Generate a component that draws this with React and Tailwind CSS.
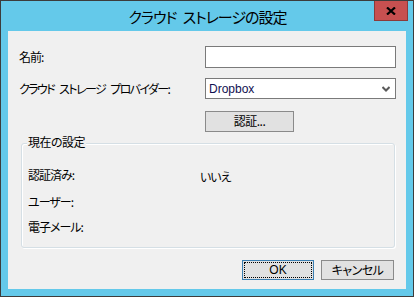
import React from 'react';

const jp = { fontFamily: '"Noto Sans CJK JP", "Noto Sans", sans-serif', fontFeatureSettings: '"palt"' };

function CloseIcon() {
  return (
    <svg width="10" height="8" viewBox="0 0 10 8">
      <path d="M1 0.5 L9 7.5 M9 0.5 L1 7.5" stroke="#000" strokeWidth="2.2" />
    </svg>
  );
}

function Chevron() {
  return (
    <svg width="8" height="6" viewBox="0 0 8 6">
      <path d="M0.5 1 L4 4.5 L7.5 1" stroke="#5a5a5a" strokeWidth="2" fill="none" />
    </svg>
  );
}

function Row({ label, children, className, tight }) {
  return (
    <div className={`flex items-center ${className}`}>
      <div className={`w-[197px] shrink-0 whitespace-nowrap pl-[11px] text-[12px] leading-none text-black ${tight ? 'tracking-[-1.6px] [word-spacing:4px]' : 'tracking-[-1px]'}`}>{label}</div>
      {children}
    </div>
  );
}

export default function App() {
  return (
    <div className="w-[414px] h-[297px] border border-[#3c3c3c] bg-[#64c9ea] flex flex-col" style={jp}>
      {/* title bar */}
      <div className="relative h-[30px] flex items-center justify-center">
        <span className="text-[15px] tracking-[-1px] [word-spacing:4px] leading-none text-black pl-[1px]">クラウド ストレージの設定</span>
        <button className="absolute right-[5px] top-0 w-[34px] h-[20px] bg-[#c75050] border border-[#8c3a3a] border-t-0 flex items-center justify-center">
          <CloseIcon />
        </button>
      </div>

      {/* client area */}
      <div className="flex-1 mx-[7px] mb-[7px] bg-[#f0f0f0] flex flex-col">
        <Row label="名前:" className="mt-[15px]">
          <input
            type="text"
            className="w-[191px] h-[22px] bg-white border border-[#7a7a7a] outline-none"
          />
        </Row>

        <Row label="クラウド ストレージ プロバイダー:" className="mt-[10px]" tight>
          <div className="w-[191px] h-[21px] bg-white border border-[#7a7a7a] flex items-center justify-between pl-[3px] pr-[5px]">
            <span className="text-[12px] leading-none text-[#101050]" style={{ fontFamily: '"Liberation Sans", Arial, sans-serif' }}>Dropbox</span>
            <Chevron />
          </div>
        </Row>

        <div className="mt-[8px] pl-[197px]">
          <button className="w-[89px] h-[21px] bg-[#e1e1e1] border border-[#8a8a8a] text-[12px] tracking-[-0.5px] leading-none text-black">
            認証...
          </button>
        </div>

        {/* group box */}
        <div className="relative mt-[11px] ml-[13px] mr-[11px] h-[105px] border border-[#d5dfe5] rounded-[3px] shadow-[inset_1px_1px_0_#fff,1px_1px_0_#fff]">
          <span className="absolute left-[5px] top-[-8px] px-[1px] bg-[#f0f0f0] text-[12px] tracking-[-0.5px] leading-none text-black">現在の設定</span>
          <div className="pl-[6px] pt-[23px] flex flex-col gap-[13px] text-[12px] tracking-[-1px] leading-none text-black">
            <div className="flex items-center">
              <span className="w-[172px]">認証済み:</span>
              <span className="mt-[4px]">いいえ</span>
            </div>
            <span>ユーザー:</span>
            <span>電子メール:</span>
          </div>
        </div>

        <div className="mt-[12px] flex justify-end gap-[7px] pr-[12px]">
          <button className="relative w-[72px] h-[20px] bg-[#e1e1e1] border border-[#3c7fb1] text-[12px] leading-none text-black" style={{ fontFamily: '"Liberation Sans", Arial, sans-serif' }}>
            <span className="absolute inset-[1px] border border-dotted border-black" />
            OK
          </button>
          <button className="w-[73px] h-[20px] bg-[#e1e1e1] border border-[#8a8a8a] text-[12px] tracking-[-0.5px] leading-none text-black">
            キャンセル
          </button>
        </div>
      </div>
    </div>
  );
}
